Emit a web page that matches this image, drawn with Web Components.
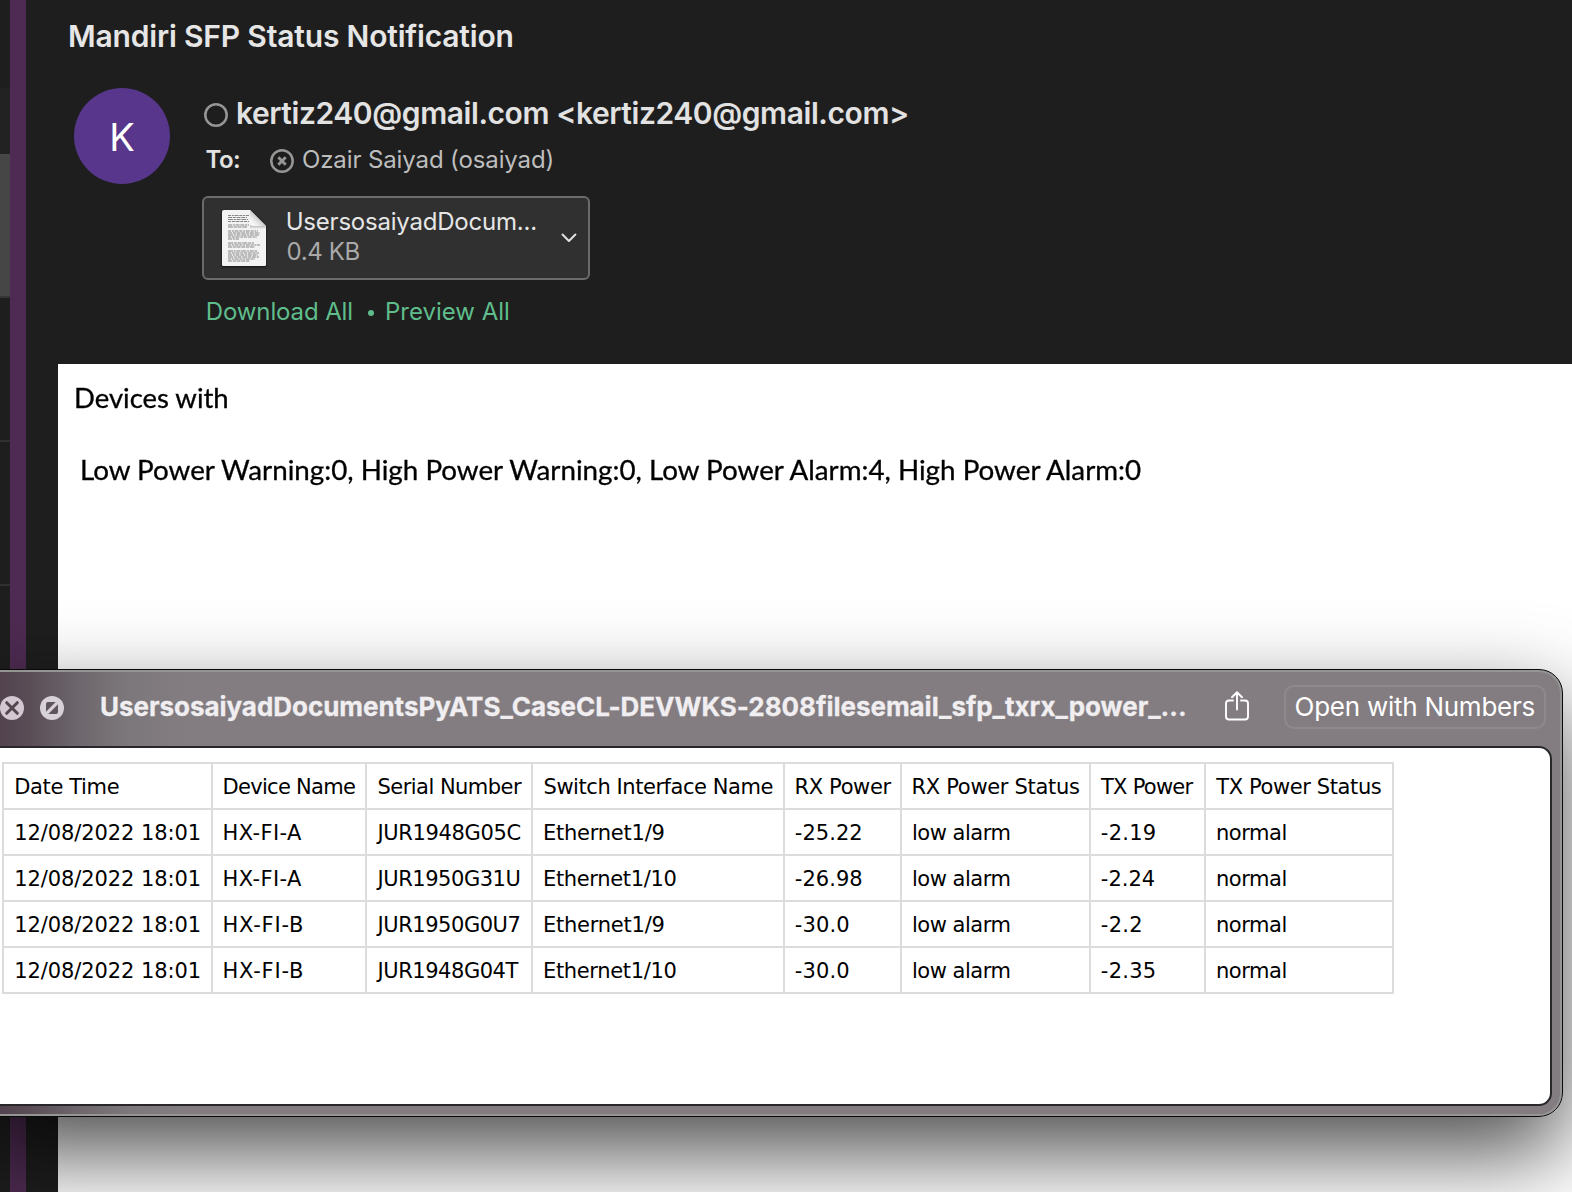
<!DOCTYPE html>
<html lang="en">
<head>
<meta charset="utf-8">
<title>Mandiri SFP Status Notification</title>
<style>
html,body{margin:0;padding:0;background:#1e1e1e;overflow:hidden}
</style>
</head>
<body>
<mail-app></mail-app>
<script>
const make = (name, html, init) => customElements.define(name, class extends HTMLElement {
  constructor() {
    super();
    this.attachShadow({mode: 'open'}).innerHTML = html;
  }
  connectedCallback() { if (init) init.call(this, this.shadowRoot); }
});

/* One line of text set to a given ink width, by tracking or by horizontal scaling. */
const ctx = document.createElement('canvas').getContext('2d');
customElements.define('fit-text', class extends HTMLElement {
  constructor() {
    super();
    this.attachShadow({mode: 'open'}).innerHTML =
      '<style>:host{display:block;white-space:pre;flex:none}span{display:inline-block;transform-origin:0 50%}</style><span></span>';
  }
  connectedCallback() {
    const span = this.shadowRoot.querySelector('span');
    const text = this.getAttribute('text');
    const target = +this.getAttribute('w');
    const dx = +(this.getAttribute('dx') || 0);
    span.textContent = text;
    const cs = getComputedStyle(this);
    ctx.font = `${cs.fontWeight} ${cs.fontSize} ${cs.fontFamily}`;
    const m = ctx.measureText(text);
    const ink = m.actualBoundingBoxLeft + m.actualBoundingBoxRight;
    this.style.width = target + 'px';
    if (this.hasAttribute('squeeze')) {
      const k = target / ink;
      span.style.transform = `scaleX(${k})`;
      span.style.marginLeft = m.actualBoundingBoxLeft * k + dx + 'px';
    } else {
      span.style.letterSpacing = (target - ink) / (text.length - 1) + 'px';
      span.style.marginLeft = m.actualBoundingBoxLeft + dx + 'px';
    }
  }
});

make('mail-list-edge', `<style>
:host{display:flex;flex-direction:column;width:10px;background:#1e1e1e}
.a{height:88px}.b{height:66px;background:#222}.c{height:142px;background:#464646}.d{height:2px;background:#353535}
.e{height:142px}.l{height:2px;background:#303030}
</style><div class="a"></div><div class="b"></div><div class="c"></div><div class="d"></div>
<div class="e"></div><div class="l"></div><div class="e"></div><div class="l"></div>`);

make('user-avatar', `<style>
:host{display:flex;align-items:center;justify-content:center;width:96px;height:96px;border-radius:50%;background:#57368b;color:#fff;font-size:38px;line-height:50px;padding-top:2px;box-sizing:border-box}
</style><slot></slot>`);

make('presence-icon', `<style>:host{display:block;width:24px;height:24px;flex:none}svg{display:block}</style>
<svg width="24" height="24" viewBox="0 0 24 24" fill="none" stroke="#989694" stroke-width="2.5"><circle cx="12" cy="12" r="10.7"/><path class="x" d="M8.300 8.300l7.400 7.400M15.700 8.300l-7.400 7.400" stroke-width="2.900"/></svg>`,
function (r) { if (!this.hasAttribute('blocked')) r.querySelector('.x').remove(); });

make('document-icon', `<style>:host{display:block;width:44px;height:58px;flex:none}svg{display:block;overflow:visible;filter:drop-shadow(0 1px 1px #0009)}</style>
<svg width="44" height="58" viewBox="0 0 44 58"><defs><linearGradient id="f" x1="0" y1="1" x2=".55" y2=".45"><stop offset="0" stop-color="#fff"/><stop offset=".5" stop-color="#eee"/><stop offset="1" stop-color="#c4c4c4"/></linearGradient>
<linearGradient id="s" x1="0" y1="0" x2="0" y2="1"><stop offset="0" stop-color="#000" stop-opacity=".28"/><stop offset="1" stop-color="#000" stop-opacity="0"/></linearGradient></defs>
<path d="M2 0H28L44 16V54.5q0 1.5-1.5 1.5H1.5Q0 56 0 54.500V1.500Q0 0 2 0z" fill="#f3f3f3"/>
<g class="t" stroke="#858585" stroke-width="1.1" fill="none"></g>
<path d="M28 15H44V19H28z" fill="url(#s)"/>
<path d="M28 0L44 16H31q-3 0-3-3z" fill="url(#f)"/></svg>`,
function (r) {
  const rows = [[5.5,21],[7.5,19],[9.5,20],[11.5,21],[15,21],[17,19],[21,30],[23,32],[25,31],[27,29],[29,11],[33,26],[35,32],[37,27],[41,29],[43,31],[45,30],[47,31],[49,27],[51,22]];
  r.querySelector('.t').innerHTML = rows.map(([y, w], i) =>
    `<path d="M6 ${y}h${w}" stroke-dasharray="${3 + i % 3} .8 ${2 + i % 2} .7 4 .8"/>`).join('');
});

make('attachment-card', `<style>
:host{display:flex;box-sizing:border-box;width:388px;height:84px;border:2px solid #6b6b6b;border-radius:6px;background:#303030;padding:12px 11px 0 18px;font-size:24px}
.n{margin:-3px 0 0 21px;width:251px;display:flex;flex-direction:column}
fit-text{height:30px;line-height:30px}.n :first-child{color:#e6e6e6}.n .s{color:#a9a9a9}
.v{margin:23px 0 0 25px}
</style><document-icon></document-icon><div class="n"><fit-text w="248.500" dx="0.700" text="UsersosaiyadDocum..."></fit-text><fit-text class="s" w="72" dx="0.500" text="0.4 KB"></fit-text></div>
<svg class="v" width="16" height="10" viewBox="0 0 16 10" fill="none" stroke="#e2e2e2" stroke-width="2" stroke-linecap="round" stroke-linejoin="round"><path d="M1.500 1.500L8 8l6.500-6.500"/></svg>`);

make('mail-header', `<style>
:host{display:block;height:364px;color:#e2e2e2}
.title{height:72px;line-height:72px;padding-left:44px;font-weight:600;font-size:30px;color:#e6e6e6}
.row{display:flex;padding:16px 0 0 48px}
.col{display:flex;flex-direction:column;margin-left:32px}
.line{display:flex;align-items:center;height:46px;line-height:46px;font-size:24px}
.from{margin-top:2px;padding-left:2px;font-size:30px;font-weight:600;gap:10px}
.from presence-icon{margin-top:3px}
.to{padding-left:4px}.to fit-text{margin-top:2px}.to presence-icon{margin:3px 9px 0 30px}.to .l{font-weight:600}.to .p{color:#bdbdbd}
attachment-card{margin-top:14px}
.links{margin-top:9px;padding-left:5px;color:#5fbd8c}
.dot{width:6px;height:6px;border-radius:3px;background:#5fbd8c;margin:2px 12px 0 17px}
</style><div class="title"><fit-text w="442.500" text="Mandiri SFP Status Notification"></fit-text></div>
<div class="row"><user-avatar>K</user-avatar><div class="col">
<div class="line from"><presence-icon></presence-icon><fit-text w="669" text="kertiz240@gmail.com &lt;kertiz240@gmail.com&gt;"></fit-text></div>
<div class="line to"><fit-text class="l" w="33.500" dx="-0.500" text="To:"></fit-text><presence-icon blocked></presence-icon><fit-text class="p" w="249.500" dx="0.500" text="Ozair Saiyad (osaiyad)"></fit-text></div>
<attachment-card></attachment-card>
<div class="line links"><fit-text w="143.500" dx="0.800" text="Download All"></fit-text><i class="dot"></i><fit-text w="121" dx="1.500" text="Preview All"></fit-text></div>
</div></div>`);

make('mail-body', `<style>
:host{display:block;height:828px;margin-left:32px;background:#fff;color:#000;font-family:Lato,"Liberation Sans",sans-serif;font-size:26px;-webkit-text-stroke:.3px #000}
.a{padding:16px 0 0 17px}.b{padding:36px 0 0 24px}fit-text{height:36px;line-height:36px}
</style><div class="a"><fit-text squeeze w="151.500" dx="1" text="Devices with"></fit-text></div>
<div class="b"><fit-text squeeze w="1065" dx="0.500" text="Low Power Warning:0, High Power Warning:0, Low Power Alarm:4, High Power Alarm:0"></fit-text></div>`);

make('data-table', `<style>
:host{display:block;padding:14px 0 0 25px}
table{border-collapse:collapse;table-layout:fixed;font-family:"DejaVu Sans",sans-serif;font-size:21px;color:#000}
td{border:2px solid #dcdcdc;height:44px;padding:0 0 0 11.500px;line-height:44px;box-sizing:border-box}
tr{height:46px}fit-text{height:44px;margin-bottom:-2px;position:relative}
</style><table><colgroup></colgroup><tbody></tbody></table>`,
function (r) {
  const cols = [209, 154, 166, 252, 117, 189, 115, 188];
  const rows = [
    [['Date Time',102.5,.7],['Device Name',130.5],['Serial Number',143.5],['Switch Interface Name',228],['RX Power',95],['RX Power Status',165.5],['TX Power',93.5,-2.5],['TX Power Status',165.5,-2.2]],
    [['12/08/2022 18:01',183.5,.7],['HX-FI-A',77.5],['JUR1948G05C',145,-3],['Ethernet1/9',118.5,.5],['-25.22',65.5,-.7],['low alarm',96.5,-.5],['-2.19',53,-.7],['normal',68.5,-.5]],
    [['12/08/2022 18:01',183.5,.7],['HX-FI-A',77.5],['JUR1950G31U',144,-3],['Ethernet1/10',130.5,.5],['-26.98',65.5,-.7],['low alarm',96.5,-.5],['-2.24',53,-.7],['normal',68.5,-.5]],
    [['12/08/2022 18:01',183.5,.7],['HX-FI-B',77.5],['JUR1950G0U7',144,-3],['Ethernet1/9',118.5,.5],['-30.0',52.5,-.7],['low alarm',96.5,-.5],['-2.2',39.5,-.7],['normal',68.5,-.5]],
    [['12/08/2022 18:01',183.5,.7],['HX-FI-B',77.5],['JUR1948G04T',143,-3],['Ethernet1/10',130.5,.5],['-30.0',52.5,-.7],['low alarm',96.5,-.5],['-2.35',53,-.7],['normal',68.5,-.5]]];
  r.querySelector('table').style.width = cols.reduce((a, b) => a + b, 2) + 'px';
  r.querySelector('colgroup').innerHTML = cols.map(w => `<col style="width:${w}px">`).join('');
  r.querySelector('tbody').innerHTML = rows.map(row => '<tr>' + row.map(([t, w, dx = 0]) =>
    `<td><fit-text w="${w}" dx="${dx}" text="${t}"></fit-text></td>`).join('') + '</tr>').join('');
});

make('preview-window', `<style>
:host{display:flex;flex-direction:column;box-sizing:border-box;position:absolute;left:-26px;top:669px;width:1589px;height:448px;border:1px solid #0a0a0a;border-radius:24px;
background:linear-gradient(90deg,#52434e 25px,#5a4d56 55px,#6c656b 100px,#7c777b 150px,#837d81 210px);
box-shadow:inset 0 0 0 2px #959694,0 36px 88px rgba(0,0,0,.7)}
.bar{display:flex;align-items:center;height:76px;flex:none;padding-left:25px;font-size:26px;color:#f3f1f3;line-height:44px}
.bar .i{flex:none;margin-right:16px;margin-top:-1px}
.t{font-weight:700;margin:-2px 0 0 21px;color:#f0eef0;-webkit-text-stroke:.3px #f0eef0}
.sh{margin:-4px 35px 0 40px;flex:none}
.btn{box-sizing:border-box;width:262px;height:44px;border:2px solid #8e898d;border-radius:10px;padding-left:10px;line-height:40px;color:#fff;margin-top:-2px;font-weight:400}
.page{box-sizing:border-box;height:360px;width:1577px;border:2px solid #29272a;border-radius:13px;background:#fff;overflow:hidden}
</style>
<div class="bar">
<svg class="i" width="24" height="24" viewBox="0 0 24 24"><circle cx="12" cy="12" r="12" fill="#d3c7d1"/><path d="M6.700 6.700l10.600 10.600M17.300 6.700L6.700 17.300" stroke="#53464f" stroke-width="3" stroke-linecap="round"/></svg>
<svg class="i" width="24" height="24" viewBox="0 0 24 24"><circle cx="12" cy="12" r="12" fill="#d9d1d8"/><path d="M6 15.700V8q0-2 2-2h7.700zM18 8.300V16q0 2-2 2H8.300z" fill="#5f555d"/></svg>
<fit-text class="t" w="1083.500" text="UsersosaiyadDocumentsPyATS_CaseCL-DEVWKS-2808filesemail_sfp_txrx_power_..."></fit-text>
<svg class="sh" width="24" height="30" viewBox="0 0 24 30" fill="none" stroke="#fff" stroke-width="1.900" stroke-linecap="round" stroke-linejoin="round"><path d="M8 9.500H4q-3 0-3 3V25.500q0 3 3 3H20q3 0 3-3V12.500q0-3-3-3H16M12 18.500V1.500M7 6.200l5-4.900 5 4.900"/></svg>
<div class="btn"><fit-text w="239" text="Open with Numbers"></fit-text></div>
</div>
<div class="page"><data-table></data-table></div>`);

make('mail-app', `<style>
:host{display:flex;position:relative;width:1572px;height:1192px;overflow:hidden;background:#1e1e1e;font-family:Inter,"Liberation Sans",sans-serif}
.div{width:16px;background:#4e2b52}.main{flex:1;min-width:0;display:flex;flex-direction:column}
</style><mail-list-edge></mail-list-edge><div class="div"></div><div class="main"><mail-header></mail-header><mail-body></mail-body></div>
<preview-window></preview-window>`);
</script>
</body>
</html>
